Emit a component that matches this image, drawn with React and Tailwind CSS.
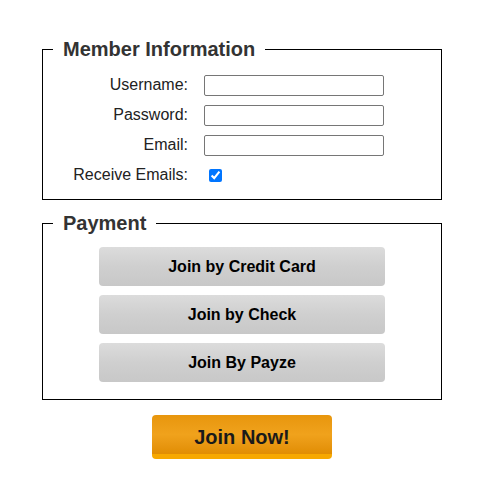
const fields = [
  { label: 'Username:', type: 'text' },
  { label: 'Password:', type: 'password' },
  { label: 'Email:', type: 'email' },
]

const payOptions = ['Join by Credit Card', 'Join by Check', 'Join By Payze']

const Legend = ({ children }) => (
  <legend className="ml-[10px] px-[10px] text-[20px] leading-[23px] font-bold text-[#333]">
    {children}
  </legend>
)

export default function App() {
  return (
    <div className="min-h-[502px] w-[484px] bg-white pt-[38px] font-['Liberation_Sans',Arial,sans-serif]">
      <fieldset className="mx-auto w-[400px] border border-black pb-[9px] pt-[9px]">
        <Legend>Member Information</Legend>
        {fields.map((f) => (
          <div key={f.label} className="flex h-[30px] items-center">
            <label className="w-[145px] text-right text-[16px] text-[#222]">{f.label}</label>
            <input
              type={f.type}
              className="ml-[16px] h-[21px] w-[180px] rounded-[2px] border border-[#767676] bg-white px-1 text-[13px]"
            />
          </div>
        ))}
        <div className="flex h-[30px] items-center">
          <label className="w-[145px] text-right text-[16px] text-[#222]">Receive Emails:</label>
          <input
            type="checkbox"
            defaultChecked
            className="ml-[21px] h-[13px] w-[13px] accent-[#0075ff]"
          />
        </div>
      </fieldset>

      <fieldset className="mx-auto mt-[12px] w-[400px] border border-black pb-[17px] pt-[12px]">
        <Legend>Payment</Legend>
        <div className="flex flex-col items-center gap-[9px]">
          {payOptions.map((p) => (
            <button
              key={p}
              className="h-[39px] w-[286px] rounded-[4px] bg-linear-to-b from-[#dcdcdc] via-[#cfcfcf] to-[#c8c8c8] pt-[1px] text-[16px] font-bold text-black"
            >
              {p}
            </button>
          ))}
        </div>
      </fieldset>

      <div className="mt-[15px] flex justify-center">
        <button className="h-[44px] w-[180px] rounded-[4px] border-b-[5px] border-[#f7a800] bg-linear-to-b from-[#e8960c] via-[#f0a21c] to-[#e18d02] pt-[5px] text-[20px] font-bold text-[#1a1a1a]">
          Join Now!
        </button>
      </div>
    </div>
  )
}
